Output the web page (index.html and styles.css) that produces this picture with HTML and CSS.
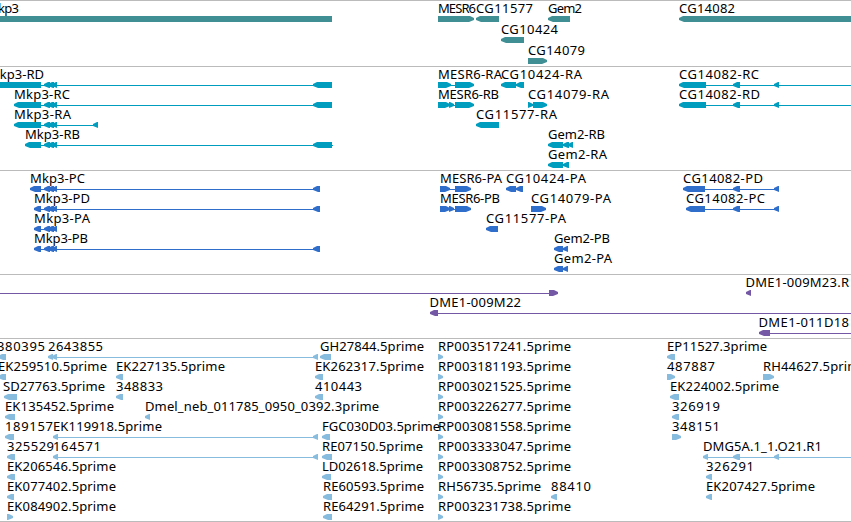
FILE: index.html
```
<!DOCTYPE html>
<html lang="en">
<head>
    <meta charset="UTF-8">
    <meta name="viewport" content="width=device-width, initial-scale=1.0">
    <title>Genome browser</title>
    <link rel="stylesheet" href="styles.css">
</head>
<body>
    <div class="browser">
        <div id="genes" class="track genes"></div>
        <div id="transcripts" class="track transcripts"></div>
        <div id="proteins" class="track proteins"></div>
        <div id="clones" class="track clones"></div>
        <div id="ests" class="track ests"></div>
    </div>
    <script src="tracks.js"></script>
</body>
</html>
```

FILE: styles.css
```
body {
    margin: 0;
    background-color: #fff;
}
.browser {
    width: 851px;
    height: 521px;
    overflow: hidden;
    border-bottom: 1px solid #bbb;
}
.track {
    box-sizing: border-box;
    padding-top: 2px;
    border-top: 1px solid #bbb;
}
.row {
    display: block;
    width: 851px;
    height: 20px;
    overflow: visible;
}
.row text {
    font-family: "Noto Sans", sans-serif;
    font-size: 13px;
    fill: #000;
}
.row line {
    stroke: currentColor;
    stroke-width: 1px;
    shape-rendering: crispEdges;
}
.row polygon {
    fill: currentColor;
}
.genes {
    height: 66px;
    color: #3f8f94;
}
.genes .row {
    height: 21px;
}
.transcripts {
    height: 104px;
    color: #009dbf;
}
.proteins {
    height: 104px;
    color: #306ecb;
}
.clones {
    height: 64px;
    color: #7458a5;
}
.ests {
    height: 183px;
    color: #87bcde;
}
```

FILE: tracks.js
```
// feature: [label, label start, label end, strand, exons, line]
const tail = [[44, 50], [48, 54], [52, 57]];
const far = [[733, 740], [774, 779]];

function rp(name) {
    return [name + '.5prime', 438, 571, '+', [[438, 443]]];
}

const tracks = {
    genes: [
        [
            ['Mkp3', -13, 19, '-', [[-12, 332]]],
            ['MESR6', 438, 476, '+', [[438, 474]]],
            ['CG11577', 476, 533, '-', [[476, 499]]],
            ['Gem2', 548, 582, '-', [[548, 570]]],
            ['CG14082', 679, 735, '-', [[679, 860]]]
        ],
        [['CG10424', 501, 558, '-', [[501, 524]]]],
        [['CG14079', 528, 585, '+', [[528, 547]]]]
    ],
    transcripts: [
        [
            ['Mkp3-RD', -12, 44, '-', [[-12, 41], ...tail, [313, 332]], [41, 313]],
            ['MESR6-RA', 438, 502, '+', [[438, 451], [455, 474]], [450, 456]],
            ['CG10424-RA', 501, 582, '-', [[501, 516], [516, 524]]],
            ['CG14082-RC', 679, 759, '-', [[679, 706], ...far], [706, 851]]
        ],
        [
            ['Mkp3-RC', 14, 70, '-', [[14, 41], ...tail, [313, 332]], [41, 313]],
            ['MESR6-RB', 438, 499, '+', [[438, 450], [449, 454], [455, 474]], [450, 456]],
            ['CG14079-RA', 528, 609, '+', [[528, 533], [533, 547]]],
            ['CG14082-RD', 679, 760, '-', [[679, 706], ...far], [706, 851]]
        ],
        [
            ['Mkp3-RA', 14, 71, '-', [[14, 41], ...tail, [93, 98]], [41, 98]],
            ['CG11577-RA', 476, 557, '-', [[476, 499]]]
        ],
        [
            ['Mkp3-RB', 25, 80, '-', [[25, 41], ...tail, [313, 332]], [41, 333]],
            ['Gem2-RB', 548, 605, '-', [[548, 563], [563, 569], [568, 573]]]
        ],
        [['Gem2-RA', 548, 607, '-', [[548, 563], [563, 569]]]]
    ],
    proteins: [
        [
            ['Mkp3-PC', 30, 85, '-', [[30, 41], ...tail, [313, 320]], [41, 313]],
            ['MESR6-PA', 440, 502, '+', [[440, 450], [455, 471]], [449, 456]],
            ['CG10424-PA', 506, 586, '-', [[506, 516], [516, 523]]],
            ['CG14082-PD', 683, 763, '-', [[683, 705], ...far], [705, 779]]
        ],
        [
            ['Mkp3-PD', 34, 90, '-', [[34, 41], ...tail, [313, 320]], [41, 313]],
            ['MESR6-PB', 440, 500, '+', [[440, 450], [449, 454], [455, 471]], [449, 456]],
            ['CG14079-PA', 531, 611, '+', [[531, 546]]],
            ['CG14082-PC', 686, 765, '-', [[686, 705], ...far], [705, 779]]
        ],
        [
            ['Mkp3-PA', 34, 90, '-', [[34, 41], ...tail], [41, 57]],
            ['CG11577-PA', 486, 566, '-', [[486, 498]]]
        ],
        [
            ['Mkp3-PB', 34, 88, '-', [[34, 41], ...tail, [313, 320]], [41, 313]],
            ['Gem2-PB', 554, 610, '-', [[554, 563], [563, 568]]]
        ],
        [['Gem2-PA', 554, 612, '-', [[554, 563], [563, 568]]]]
    ],
    clones: [
        [
            ['', 0, 0, '+', [[549, 558]], [0, 550]],
            ['DME1-009M23.R', 745.5, 849, '-', [[746, 751]]]
        ],
        [['DME1-009M22', 429.5, 521, '-', [[430, 438]], [438, 851]]],
        [['DME1-011D18', 758.5, 849, '-', [[759, 770]], [770, 851]]]
    ],
    ests: [
        [
            ['380395', -3, 45, '-', [[-2, 6]]],
            ['2643855', 48, 103, '-', [[48, 53], [52, 57], [313, 318]], [57, 313]],
            ['GH27844.5prime', 320, 424, '-', [[320, 331]]],
            rp('RP003517241'),
            ['EP11527.3prime', 667, 767, '-', [[667, 675]]]
        ],
        [
            ['EK259510.5prime', -2, 107, '-', [[-2, 6]]],
            ['EK227135.5prime', 116, 225, '-', [[116, 123]]],
            ['EK262317.5prime', 315, 424, '-', [[315, 323]]],
            rp('RP003181193'),
            ['487887', 667, 715, '+', [[667, 675]]],
            ['RH44627.5prime', 763, 867, '+', [[763, 774]]]
        ],
        [
            ['SD27763.5prime', 3, 105, '-', [[4, 17]]],
            ['348833', 116, 163, '-', [[116, 123]]],
            ['410443', 315, 362, '-', [[315, 323]]],
            rp('RP003021525'),
            ['EK224002.5prime', 670, 779, '-', [[670, 679]]]
        ],
        [
            ['EK135452.5prime', 5, 114, '-', [[5, 15]]],
            ['Dmel_neb_011785_0950_0392.3prime', 145, 379, '-', [[145, 150]]],
            rp('RP003226277'),
            ['326919', 672, 720, '-', [[672, 679]]]
        ],
        [
            ['189157', 5, 53, '-', [[5, 14]]],
            ['EK119918.5prime', 53, 162, '-', [[53, 58], [313, 318]], [58, 313]],
            ['FGC030D03.5prime', 322, 440, '-', [[322, 330]]],
            rp('RP003081558'),
            ['348151', 672, 720, '+', [[672, 681]]]
        ],
        [
            ['325529', 7, 54, '-', [[7, 15]]],
            ['164571', 53, 101, '-', [[53, 58], [313, 318]], [58, 313]],
            ['RE07150.5prime', 322, 423, '-', [[322, 332]]],
            rp('RP003333047'),
            ['DMG5A.1_1.O21.R1', 703, 822, '-', [[703, 708], ...far], [708, 851]]
        ],
        [
            ['EK206546.5prime', 7, 116, '-', [[7, 15]]],
            ['LD02618.5prime', 322, 423, '-', [[322, 331]]],
            rp('RP003308752'),
            ['326291', 706, 754, '-', [[706, 712]]]
        ],
        [
            ['EK077402.5prime', 7, 116, '-', [[7, 14]]],
            ['RE60593.5prime', 323, 424, '-', [[323, 332]]],
            ['RH56735.5prime', 438, 541, '+', [[438, 443]]],
            ['88410', 551, 591, '-', [[551, 557]]],
            ['EK207427.5prime', 706, 815, '-', [[706, 712]]]
        ],
        [
            ['EK084902.5prime', 7, 116, '+', [[7, 13]]],
            ['RE64291.5prime', 323, 424, '-', [[323, 332]]],
            rp('RP003231738')
        ]
    ]
};

// box with a pointed end, 13 to 19 px below the row top
function exon(start, end, strand) {
    if (strand == '-') {
        return `<polygon points="${start},15 ${start + 4},13 ${end},13 ${end},19 ${start + 5},19 ${start},17"/>`;
    }
    return `<polygon points="${end},15 ${end - 4},13 ${start},13 ${start},19 ${end - 5},19 ${end},17"/>`;
}

function feature([label, start, end, strand, exons, line]) {
    let out = '';
    if (line) out += `<line x1="${line[0]}" y1="16.5" x2="${line[1]}" y2="16.5"/>`;
    exons.forEach(function(e){
        out += exon(e[0], e[1], strand);
    });
    if (label) out += `<text x="${start}" y="10" textLength="${end - start}">${label}</text>`;
    return out;
}

for (let id in tracks) {
    document.getElementById(id).innerHTML = tracks[id].map(function(row){
        return `<svg class="row">${row.map(feature).join('')}</svg>`;
    }).join('');
}
```
